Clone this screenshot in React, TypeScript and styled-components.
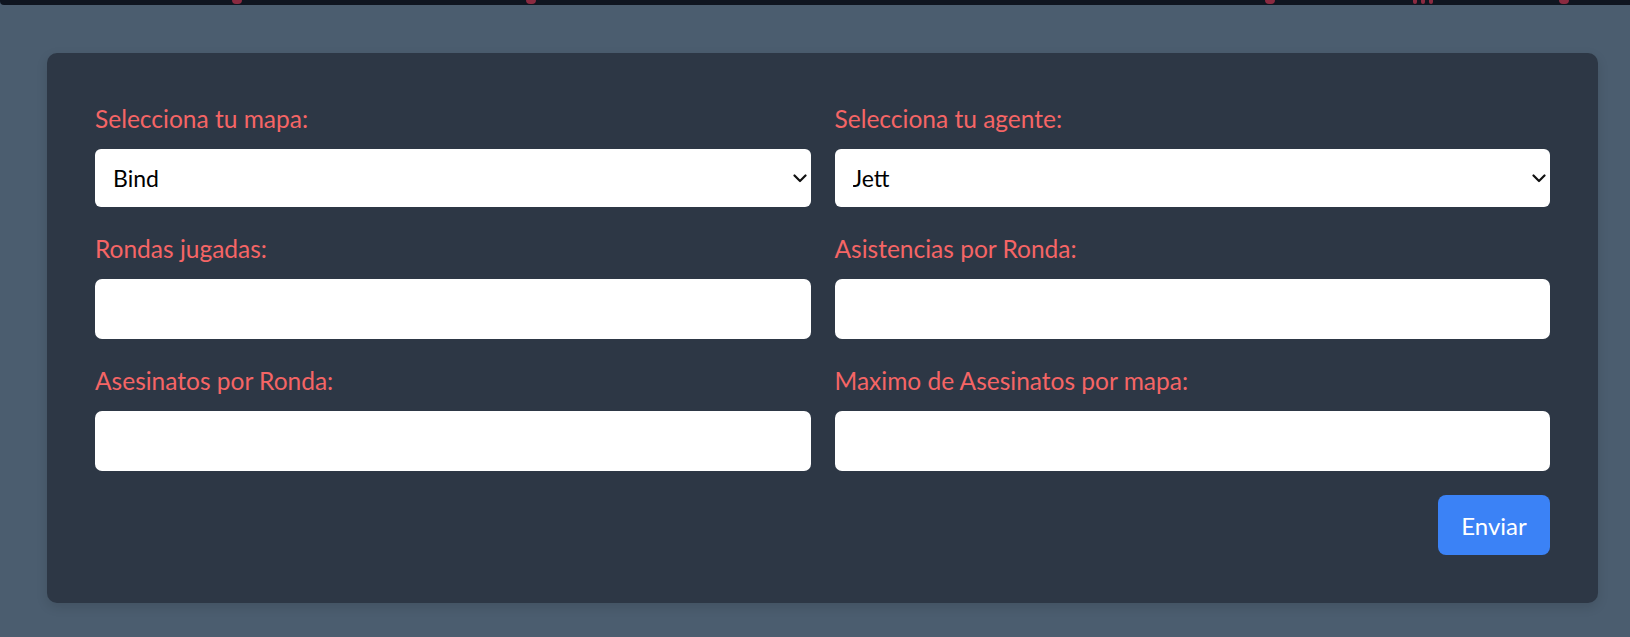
import styled, { createGlobalStyle } from 'styled-components';

const GlobalStyle = createGlobalStyle`
  html, body {
    margin: 0;
    padding: 0;
    background-color: #4b5d6f;
    font-family: Lato, "Noto Sans", sans-serif;
  }
  * {
    box-sizing: border-box;
  }
`;

const Page = styled.div`
  min-height: 637px;
  background-color: #4b5d6f;
`;

const TopStrip = styled.div`
  position: relative;
  height: 5px;
  background-color: #0f1520;
  border-bottom-left-radius: 4px;
`;

const Nub = styled.span<{ $left: number; $wide?: boolean }>`
  position: absolute;
  top: 0;
  left: ${(p) => p.$left}px;
  width: ${(p) => (p.$wide ? 4 : 10)}px;
  height: 4px;
  border-radius: 0 0 4px 4px;
  background-color: #8a2a40;
`;

const Wrapper = styled.main`
  padding: 48px 32px 35px 47px;
`;

const Card = styled.form`
  background-color: #2d3745;
  border-radius: 10px;
  padding: 48px;
  box-shadow: 0 4px 12px rgba(0, 0, 0, 0.12);
`;

const Grid = styled.div`
  display: grid;
  grid-template-columns: 1fr 1fr;
  column-gap: 24px;
  row-gap: 24px;
`;

const Field = styled.div`
  display: flex;
  flex-direction: column;
`;

const Label = styled.label`
  color: #f56565;
  font-size: 24.5px;
  line-height: 36px;
  margin-bottom: 12px;
`;

const SelectWrap = styled.div`
  position: relative;
`;

const Select = styled.select`
  appearance: none;
  width: 100%;
  height: 58px;
  border: none;
  border-radius: 6px;
  background-color: #ffffff;
  color: #000000;
  font-family: Lato, "Noto Sans", sans-serif;
  font-size: 23px;
  padding: 0 40px 0 18px;
  outline: none;
`;

const Chevron = styled.svg`
  position: absolute;
  right: 4px;
  top: 50%;
  width: 14px;
  height: 9px;
  margin-top: -4px;
  pointer-events: none;
`;

const Input = styled.input`
  width: 100%;
  height: 60px;
  border: none;
  border-radius: 7px;
  background-color: #ffffff;
  font-family: Lato, "Noto Sans", sans-serif;
  font-size: 23px;
  padding: 0 18px;
  outline: none;
`;

const Actions = styled.div`
  display: flex;
  justify-content: flex-end;
  margin-top: 24px;
`;

const SubmitButton = styled.button`
  width: 112px;
  height: 60px;
  border: none;
  border-radius: 8px;
  background-color: #3b82f6;
  color: #ffffff;
  font-family: Lato, "Noto Sans", sans-serif;
  font-size: 24px;
  cursor: pointer;

  &:hover {
    opacity: 0.9;
  }
`;

const maps = ['Bind', 'Haven', 'Split', 'Ascent', 'Icebox', 'Breeze', 'Fracture', 'Pearl', 'Lotus'];
const agents = ['Jett', 'Phoenix', 'Sage', 'Sova', 'Brimstone', 'Viper', 'Cypher', 'Reyna', 'Killjoy', 'Omen'];

function SelectField({ label, options }: { label: string; options: string[] }) {
  return (
    <Field>
      <Label>{label}</Label>
      <SelectWrap>
        <Select defaultValue={options[0]}>
          {options.map((o) => (
            <option key={o}>{o}</option>
          ))}
        </Select>
        <Chevron viewBox="0 0 14 9" fill="none">
          <path d="M1.5 1.5 L7 7 L12.5 1.5" stroke="#111" strokeWidth="2.2" strokeLinecap="round" strokeLinejoin="round" />
        </Chevron>
      </SelectWrap>
    </Field>
  );
}

function InputField({ label }: { label: string }) {
  return (
    <Field>
      <Label>{label}</Label>
      <Input type="number" />
    </Field>
  );
}

export default function App() {
  return (
    <>
      <GlobalStyle />
      <Page>
        <TopStrip>
          <Nub $left={232} />
          <Nub $left={526} />
          <Nub $left={1265} />
          <Nub $left={1413} $wide />
          <Nub $left={1421} $wide />
          <Nub $left={1429} $wide />
          <Nub $left={1559} />
        </TopStrip>
        <Wrapper>
          <Card onSubmit={(e) => e.preventDefault()}>
            <Grid>
              <SelectField label="Selecciona tu mapa:" options={maps} />
              <SelectField label="Selecciona tu agente:" options={agents} />
              <InputField label="Rondas jugadas:" />
              <InputField label="Asistencias por Ronda:" />
              <InputField label="Asesinatos por Ronda:" />
              <InputField label="Maximo de Asesinatos por mapa:" />
            </Grid>
            <Actions>
              <SubmitButton type="submit">Enviar</SubmitButton>
            </Actions>
          </Card>
        </Wrapper>
      </Page>
    </>
  );
}
